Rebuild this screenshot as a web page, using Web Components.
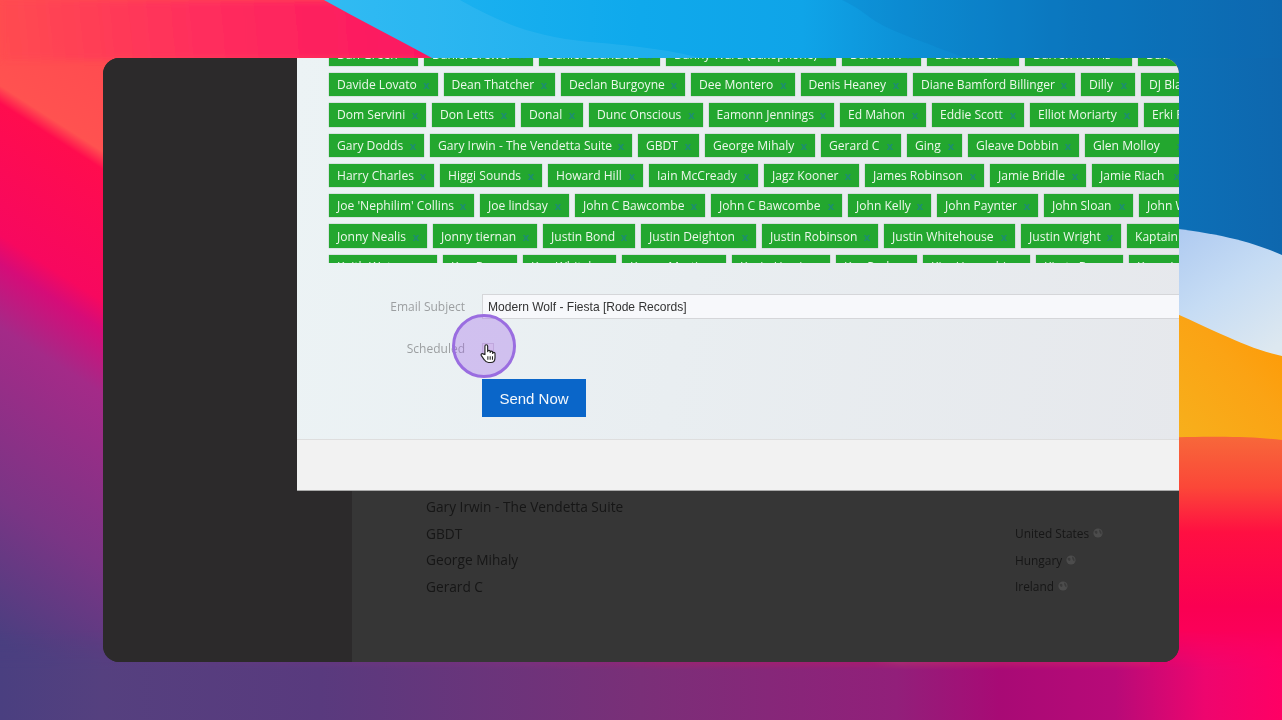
<!DOCTYPE html>
<html>
<head>
<meta charset="utf-8">
<title>Send Now</title>
<style>
  html, body { margin: 0; height: 100%; overflow: hidden; background: #e0105a; }
  body { font-family: "Open Sans", sans-serif; }
</style>
</head>
<body>
<desk-top>
  <app-window>
    <list-row slot="list" name="Gary Irwin - The Vendetta Suite"></list-row>
    <list-row slot="list" name="GBDT" country="United States"></list-row>
    <list-row slot="list" name="George Mihaly" country="Hungary"></list-row>
    <list-row slot="list" name="Gerard C" country="Ireland"></list-row>
    <send-modal slot="modal"></send-modal>
  </app-window>
</desk-top>

<script>
// [name, width]
const TAG_ROWS = [
  [['Dan Green', 89], ['Daniel Brewer', 109], ['Daniel Saunders', 121], ['Danny Ward (Saxophone)', 170], ['Darren H', 79], ['Darren Bell', 92], ['Darren Norris', 107], ['Dave Green', 90]],
  [['Davide Lovato', 108.5], ['Dean Thatcher', 111.5], ['Declan Burgoyne', 124], ['Dee Montero', 103.5], ['Denis Heaney', 106.5], ['Diane Bamford Billinger', 162], ['Dilly', 54], ['DJ Blackstone', 110]],
  [['Dom Servini', 97], ['Don Letts', 83], ['Donal', 62], ['Dunc Onscious', 113.5], ['Eamonn Jennings', 125.5], ['Ed Mahon', 86], ['Eddie Scott', 92], ['Elliot Moriarty', 108], ['Erki Pärnoja', 100]],
  [['Gary Dodds', 95], ['Gary Irwin - The Vendetta Suite', 202], ['GBDT', 61], ['George Mihaly', 110], ['Gerard C', 80], ['Ging', 55], ['Gleave Dobbin', 111], ['Glen Molloy', 106]],
  [['Harry Charles', 105], ['Higgi Sounds', 102], ['Howard Hill', 95], ['Iain McCready', 109], ['Jagz Kooner', 95], ['James Robinson', 119], ['Jamie Bridle', 96], ['Jamie Riach', 96]],
  [['Joe \'Nephilim\' Collins', 145], ['Joe lindsay', 89], ['John C Bawcombe', 130], ['John C Bawcombe', 131], ['John Kelly', 83], ['John Paynter', 101], ['John Sloan', 89], ['John Wilson', 90]],
  [['Jonny Nealis', 98], ['Jonny tiernan', 104], ['Justin Bond', 92], ['Justin Deighton', 115], ['Justin Robinson', 116], ['Justin Whitehouse', 131], ['Justin Wright', 100], ['Kaptain Kirk', 100]],
  [['Keith Waters', 108], ['Ken Ryan', 74], ['Ken Whitaker', 93], ['Kenny Martin', 104], ['Kevin Harris', 98], ['Kev Parker', 81], ['Kim Hampshire', 107], ['Kirsty Byrne', 87], ['Kerry Lee', 90]]
];

class DeskTop extends HTMLElement {
  constructor() {
    super();
    this.attachShadow({ mode: 'open' });
    this.shadowRoot.innerHTML = `
      <style>
        :host { display: flex; width: 1282px; height: 720px; padding: 58px 103px; box-sizing: border-box; position: relative; overflow: hidden; }
        svg { position: absolute; inset: 0; }
        ::slotted(*) { position: relative; }
      </style>
      <svg width="1282" height="720" viewBox="0 0 1282 720">
        <defs>
          <filter id="b3"><feGaussianBlur stdDeviation="3"/></filter>
          <linearGradient id="left" gradientUnits="userSpaceOnUse" x1="0" y1="0" x2="-324" y2="504">
            <stop offset="0" stop-color="#ff4c50"/>
            <stop offset=".12" stop-color="#ff5250"/>
            <stop offset=".145" stop-color="#ff0c4e"/>
            <stop offset=".33" stop-color="#f7085f"/>
            <stop offset=".37" stop-color="#d60c78"/>
            <stop offset=".46" stop-color="#a42a88"/>
            <stop offset=".7" stop-color="#7a3585"/>
            <stop offset=".9" stop-color="#4a3f80"/>
          </linearGradient>
          <linearGradient id="top" gradientUnits="userSpaceOnUse" x1="0" y1="40" x2="430" y2="0">
            <stop offset="0" stop-color="#ff4c50"/><stop offset=".45" stop-color="#ff2c5e"/><stop offset="1" stop-color="#fc0f64"/>
          </linearGradient>
          <linearGradient id="blue" gradientUnits="userSpaceOnUse" x1="324" y1="0" x2="1282" y2="0">
            <stop offset="0" stop-color="#22b6f2"/><stop offset=".33" stop-color="#0fa9ec"/><stop offset=".5" stop-color="#0fa4e8"/><stop offset=".6" stop-color="#0d92d8"/><stop offset=".78" stop-color="#0b78c0"/><stop offset="1" stop-color="#0e67ae"/>
          </linearGradient>
          <linearGradient id="sky" x1="0" y1="0" x2=".6" y2="1">
            <stop offset="0" stop-color="#a9c6f0"/><stop offset=".55" stop-color="#c6dcf4"/><stop offset="1" stop-color="#dde8f0"/>
          </linearGradient>
          <linearGradient id="orange" x1="0" y1="1" x2="1" y2="0">
            <stop offset="0" stop-color="#f6b31e"/><stop offset=".6" stop-color="#fba314"/><stop offset="1" stop-color="#ff9700"/>
          </linearGradient>
          <linearGradient id="redr" gradientUnits="userSpaceOnUse" x1="0" y1="436" x2="0" y2="720">
            <stop offset="0" stop-color="#f7683a"/><stop offset=".18" stop-color="#fb4738"/><stop offset=".34" stop-color="#ff0f42"/><stop offset=".6" stop-color="#fa0052"/><stop offset="1" stop-color="#ff0070"/>
          </linearGradient>
          <linearGradient id="bot" gradientUnits="userSpaceOnUse" x1="0" y1="0" x2="1282" y2="0">
            <stop offset="0" stop-color="#4a3f80"/><stop offset=".08" stop-color="#55407f"/><stop offset=".25" stop-color="#593a7e"/><stop offset=".5" stop-color="#7a2f78"/><stop offset=".7" stop-color="#921f7a"/><stop offset=".78" stop-color="#a80a75"/><stop offset=".87" stop-color="#b80a78"/><stop offset=".94" stop-color="#ee056e"/><stop offset="1" stop-color="#ff0064"/>
          </linearGradient>
          <linearGradient id="fade" x1="0" y1="0" x2="0" y2="1">
            <stop offset="0" stop-color="#000"/><stop offset=".45" stop-color="#fff"/>
          </linearGradient>
          <mask id="botfade" maskUnits="userSpaceOnUse" x="0" y="630" width="1282" height="90">
            <rect x="0" y="630" width="1282" height="90" fill="url(#fade)"/>
          </mask>
        </defs>
        <rect width="1282" height="720" fill="url(#left)"/>
        <rect width="440" height="60" fill="url(#top)" opacity=".9" filter="url(#b3)"/>
        <path d="M324 0 H1282 V260 H1100 V80 H470 L432 58 C395 38 360 20 324 0Z" fill="url(#blue)"/>
        <path d="M324 0 H460 C500 22 530 36 590 42 C640 46 680 52 700 58 H432 C395 38 360 20 324 0Z" fill="#fff" opacity=".07"/>
        <path d="M842 0 C850 4 858 8 868 16 C885 30 920 40 965 58 H1282 V0Z" fill="#0b6fb8" opacity=".18"/>
        <path d="M1150 226 C1215 232 1250 241 1282 255 V380 H1150Z" fill="url(#sky)"/>
        <path d="M1150 302 C1215 330 1245 348 1282 356 V445 H1150Z" fill="url(#orange)"/>
        <path d="M1150 438 C1215 436 1250 436 1282 440 V720 H1150Z" fill="url(#redr)"/>
        <rect x="0" y="630" width="1282" height="90" fill="url(#bot)" mask="url(#botfade)"/>
      </svg>
      <slot></slot>`;
  }
}

class AppWindow extends HTMLElement {
  constructor() {
    super();
    this.attachShadow({ mode: 'open' });
    this.shadowRoot.innerHTML = `
      <style>
        :host { display: grid; grid-template-columns: 249px 1fr; width: 1076px; height: 604px; border-radius: 16px; overflow: hidden; position: relative; background: #363636; }
        .side { background: #2c2a2b; }
        .main { padding: 435px 0 0 74px; background: #363636; }
        .modal { position: absolute; left: 194px; top: 0; right: 0; }
      </style>
      <div class="side"></div>
      <div class="main"><slot name="list"></slot></div>
      <div class="modal"><slot name="modal"></slot></div>`;
  }
}

class ListRow extends HTMLElement {
  constructor() {
    super();
    this.attachShadow({ mode: 'open' });
    const country = this.getAttribute('country');
    this.shadowRoot.innerHTML = `
      <style>
        :host { display: grid; grid-template-columns: 589px auto; align-items: center; height: 26.7px; color: #161616; font-family: "Open Sans", sans-serif; font-size: 13.7px; filter: blur(.5px); }
        .c { display: flex; align-items: center; gap: 4px; font-size: 11.9px; }
        svg { display: block; }
      </style>
      <span>${this.getAttribute('name')}</span>
      ${country ? `<span class="c">${country}
        <svg width="10" height="10" viewBox="0 0 10 10"><circle cx="5" cy="5" r="4.6" fill="#4c4c4c"/><path d="M1.5 3.5 C3 2 5 3 4.4 5 C3.8 6.6 2 6 1.5 3.5Z M6 1.5 C8 2 9 4 8.4 6.4 C7 6 6 3.5 6 1.5Z" fill="#3a3a3a"/></svg></span>` : ''}`;
  }
}

class TagChip extends HTMLElement {
  constructor() {
    super();
    this.attachShadow({ mode: 'open' });
    this.shadowRoot.innerHTML = `
      <style>
        :host { display: flex; flex: 0 0 auto; align-items: center; justify-content: space-between; box-sizing: border-box; height: 23.3px; padding: 0 8px; background: #23a72f; color: #eef8ec; font-family: "Open Sans", sans-serif; font-size: 12.08px; white-space: nowrap; overflow: hidden; box-shadow: 0 0 1px rgba(40,90,50,.55); }
        .x { color: #1e8e70; font-size: 11px; font-weight: 700; }
      </style>
      <span><slot></slot></span><span class="x">x</span>`;
  }
}

class TagList extends HTMLElement {
  constructor() {
    super();
    this.attachShadow({ mode: 'open' });
    this.shadowRoot.innerHTML = `
      <style>
        :host { display: flex; flex-direction: column; gap: 7px; height: 204.5px; margin-bottom: .5px; padding-left: 32px; overflow: hidden; filter: blur(.45px); }
        .tag-row { display: flex; gap: 6px; }
        .tag-row:first-of-type { margin-top: -15.3px; }
      </style>`;
    TAG_ROWS.forEach(row => {
      const el = document.createElement('div');
      el.className = 'tag-row';
      row.forEach(([name, w]) => {
        const chip = document.createElement('tag-chip');
        chip.textContent = name;
        chip.style.width = w + 'px';
        el.appendChild(chip);
      });
      this.shadowRoot.appendChild(el);
    });
  }
}

class SendModal extends HTMLElement {
  constructor() {
    super();
    this.attachShadow({ mode: 'open' });
    this.shadowRoot.innerHTML = `
      <style>
        :host { display: flex; flex-direction: column; height: 433px; box-sizing: border-box; background: linear-gradient(100deg, #ecf3f5 0%, #e9eef1 45%, #e6e8ec 100%); border-bottom: 1px solid #a9a9a9; overflow: hidden; font-family: "Open Sans", sans-serif; }
        .form { flex: 1; display: grid; grid-template-columns: 168px 1fr; column-gap: 17px; grid-auto-rows: min-content; padding-top: 31px; align-items: center; filter: blur(.35px); }
        label { justify-self: end; font-size: 12px; color: #9c9fa1; }
        .input { height: 25px; box-sizing: border-box; display: flex; align-items: center; padding-left: 5px; background: #f7f8fb; border: 1px solid #d5d6d9; border-right: 0; font: 12.05px "Liberation Sans", sans-serif; color: #333; }
        .sched { margin-top: 24px; line-height: 12px; }
        .box { margin-top: 24px; width: 12px; height: 12px; box-sizing: border-box; background: #ece8f0; border: 1px solid #d0c8d6; }
        .btn { grid-column: 2; justify-self: start; margin-top: 24px; width: 104px; height: 38px; display: flex; align-items: center; justify-content: center; background: #0a66c9; color: #f4f8fc; font: 15px "Liberation Sans", sans-serif; }
        .foot { height: 51px; box-sizing: border-box; background: #f2f2f2; border-top: 1px solid #dedede; }
        .pointer { position: absolute; left: 155px; top: 256px; width: 64px; height: 64px; box-sizing: border-box; border-radius: 50%; border: 3px solid #9a6de0; background: rgba(163,108,232,.36); display: flex; align-items: center; justify-content: center; }
        .pointer svg { margin: 14px 0 0 8px; }
      </style>
      <tag-list></tag-list>
      <div class="form">
        <label>Email Subject</label>
        <div class="input">Modern Wolf - Fiesta [Rode Records]</div>
        <label class="sched">Scheduled</label>
        <div class="box"></div>
        <div class="btn">Send Now</div>
      </div>
      <div class="foot"></div>
      <div class="pointer">
        <svg width="17" height="21" viewBox="0 0 16 20"><path d="M4.6 11 V3 a1.3 1.3 0 0 1 2.6 0 V8.2 a1.2 1.2 0 0 1 2.4 0 V9 a1.2 1.2 0 0 1 2.4 0 V10 a1.1 1.1 0 0 1 2.2 0 V14 c0 2.6-1.4 4.6-4 4.6 H8 c-2 0-3-1-4-2.6 L1.2 12 c-.8-1.4 1-2.6 2-1.4Z" fill="#fff" stroke="#222" stroke-width="1.1" stroke-linejoin="round"/><path d="M7.4 12.5 V16 M9.6 12.5 V16 M11.8 12.5 V16" stroke="#222" stroke-width="1"/></svg>
      </div>`;
  }
}

customElements.define('tag-chip', TagChip);
customElements.define('tag-list', TagList);
customElements.define('send-modal', SendModal);
customElements.define('list-row', ListRow);
customElements.define('app-window', AppWindow);
customElements.define('desk-top', DeskTop);
</script>
</body>
</html>
